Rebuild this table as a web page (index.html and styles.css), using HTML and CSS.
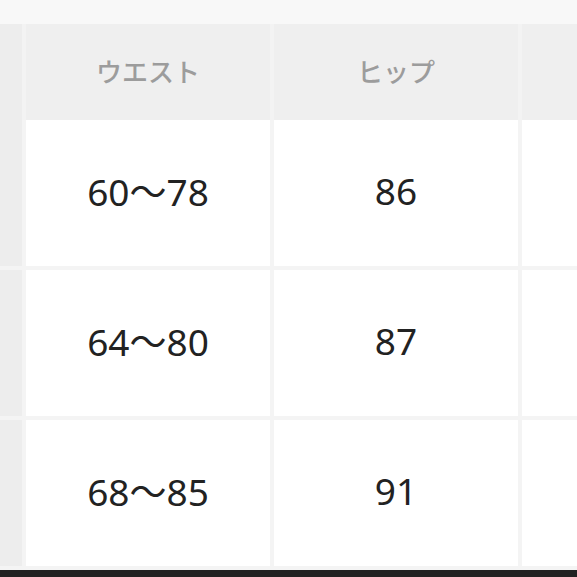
FILE: index.html
```html
<!DOCTYPE html>
<html lang="ja">
<head>
<meta charset="utf-8">
<link rel="stylesheet" href="styles.css">
</head>
<body>
<div class="top"></div>
<div class="grid head">
  <div class="side"></div>
  <div class="hcell">ウエスト</div>
  <div class="hcell">ヒップ</div>
  <div class="hcell"></div>
</div>
<div class="grid body-rows">
  <div class="side"></div>
  <div class="cell">60〜78</div>
  <div class="cell">86</div>
  <div class="cell"></div>
  <div class="side"></div>
  <div class="cell">64〜80</div>
  <div class="cell">87</div>
  <div class="cell"></div>
  <div class="side"></div>
  <div class="cell">68〜85</div>
  <div class="cell">91</div>
  <div class="cell"></div>
</div>
<div class="gapline"></div>
<div class="footer"></div>
</body>
</html>
```
FILE: styles.css
```css
html, body {
  margin: 0;
  padding: 0;
  background: #f8f8f8;
  overflow: hidden;
  font-family: "Noto Sans CJK JP", "Noto Sans", sans-serif;
}
.top {
  height: 24px;
  background: #f8f8f8;
}
.grid {
  display: grid;
  grid-template-columns: 22px 244px 244px 1fr;
  column-gap: 4px;
  width: 100%;
}
.head {
  height: 96px;
  background: #f3f3f3;
}
.head .side {
  background: #ededed;
}
.hcell {
  background: #efefef;
  color: #9c9c9c;
  font-size: 26px;
  font-weight: 500;
  display: flex;
  align-items: center;
  justify-content: center;
  padding-bottom: 4px;
  box-sizing: border-box;
}
.body-rows {
  grid-template-rows: 146px 146px 146px;
  row-gap: 4px;
  background: #f4f4f4;
}
.body-rows .side {
  background: #ededed;
}
.cell {
  background: #ffffff;
  color: #222222;
  font-family: "Noto Sans", "Noto Sans CJK JP", sans-serif;
  font-size: 37px;
  display: flex;
  align-items: center;
  justify-content: center;
  padding-bottom: 6px;
  box-sizing: border-box;
}
.gapline {
  height: 4px;
  background: #f4f4f4;
}
.footer {
  height: 10px;
  background: #222222;
}
```
